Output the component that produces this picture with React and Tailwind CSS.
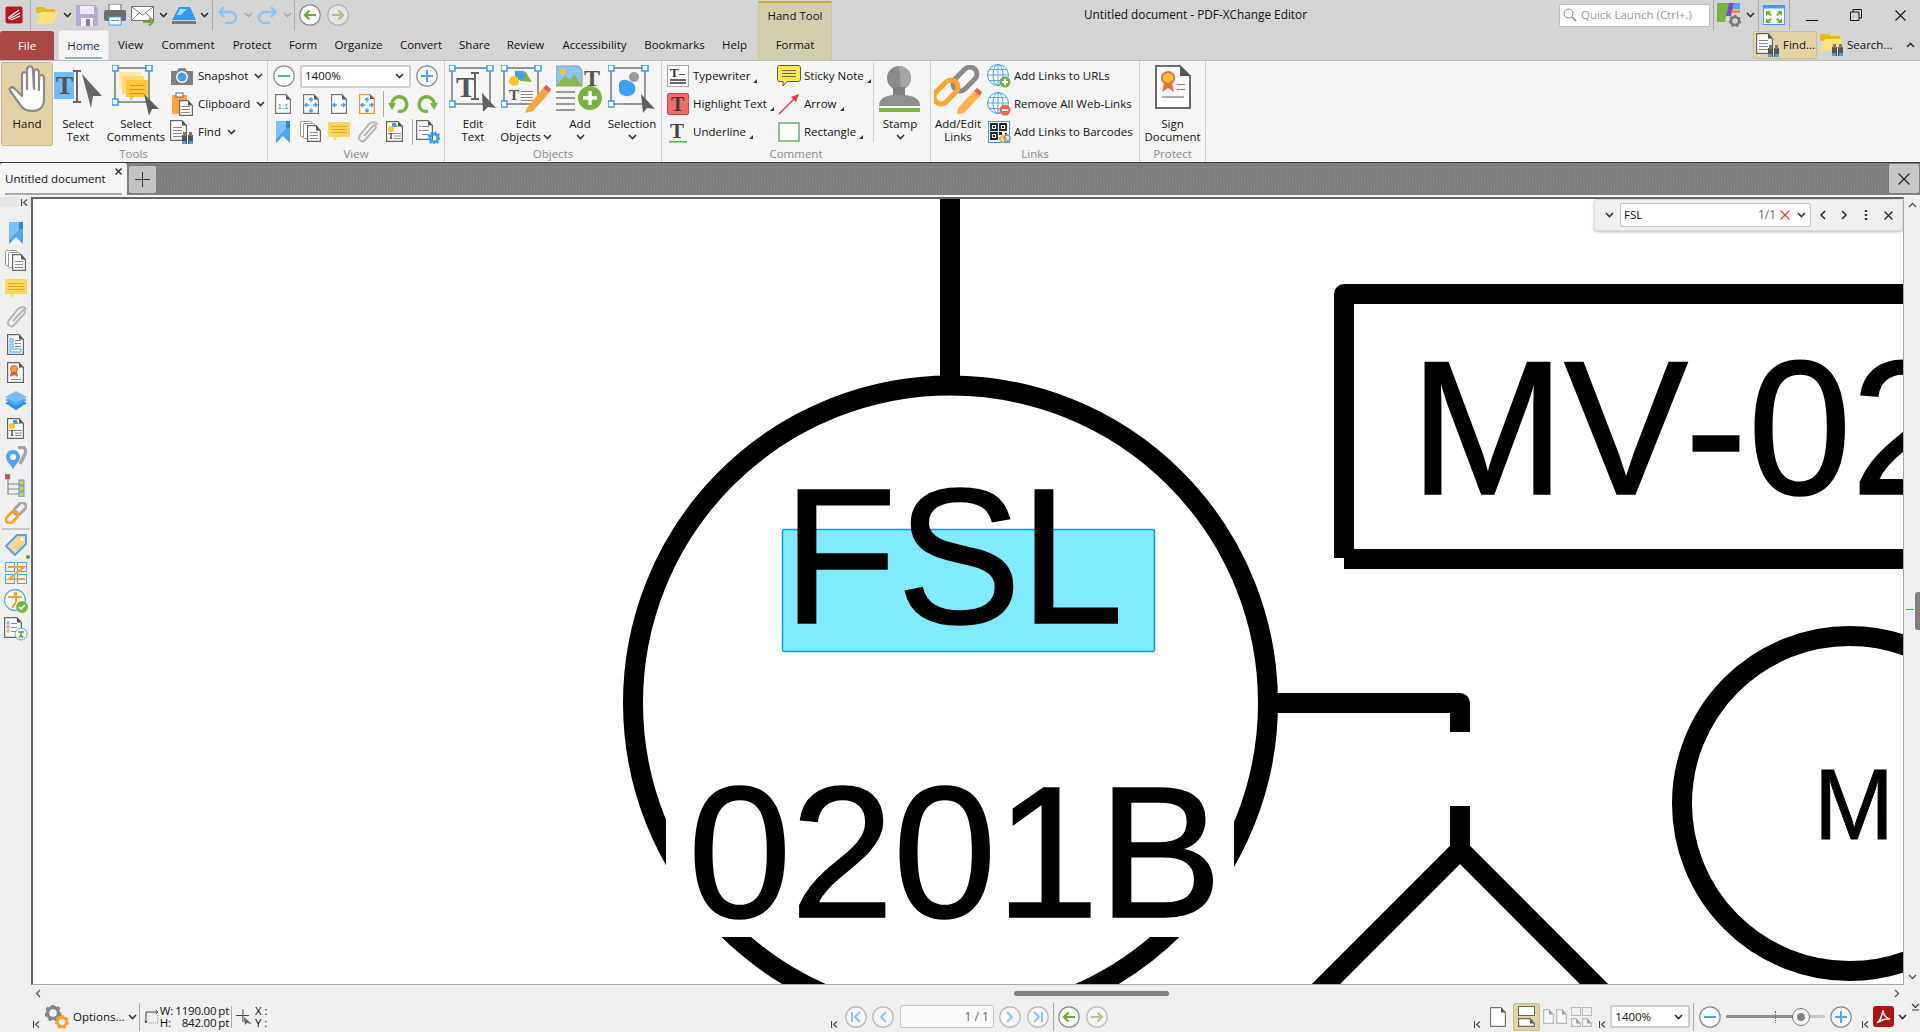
import React from "react";

const S = ({ w = 24, h = 24, v, children }) => (
  <svg width={w} height={h} viewBox={v || `0 0 ${w} ${h}`} className="block shrink-0">{children}</svg>
);

const Chev = ({ c = "#333" }) => (
  <svg width="9" height="6" viewBox="0 0 9 6" className="block shrink-0"><path d="M1 1 L4.5 4.5 L8 1" fill="none" stroke={c} strokeWidth="1.6" /></svg>
);
const Corner = () => (
  <svg width="4" height="4" viewBox="0 0 4 4" className="block shrink-0 mt-[9px] ml-[3px]"><path d="M4 0V4H0Z" fill="#333" /></svg>
);
const Sep = ({ h = 30 }) => <div style={{ height: h }} className="w-px bg-[#aaaaaa] shrink-0" />;
const Grip = ({ h = 15 }) => (
  <div className="flex flex-col items-start w-[10px] shrink-0">
    <div style={{ height: h }} className="w-[9px] bg-[radial-gradient(#a8a8a8_35%,transparent_40%)] bg-[length:2px_2px]" />
    <Collapse />
  </div>
);
const Collapse = () => (
  <svg width="7" height="7" viewBox="0 0 7 7" className="block mt-[1px]"><path d="M.5 0V7M6 .5 2.5 3.5 6 6.5" fill="none" stroke="#444" strokeWidth="1.1" /></svg>
);

/* ---------- shared drawing pieces ---------- */
const Frame = ({ x = 3, y = 3, w = 34, h = 34, br = false }) => (
  <g>
    <rect x={x} y={y} width={w} height={h} fill="none" stroke="#959595" strokeWidth="2" />
    {[[x, y], [x + w, y], [x, y + h]].concat(br ? [[x + w, y + h]] : []).map(([a, b], i) => (
      <rect key={i} x={a - 3} y={b - 3} width="6" height="6" fill="#fff" stroke="#3f9ff2" strokeWidth="1.6" />
    ))}
  </g>
);
const T = ({ x, y, s = 24, c = "#555", f = "Liberation Serif" }) => (
  <text x={x} y={y} fontFamily={f} fontWeight="700" fontSize={s} fill={c}>T</text>
);
const Doc = ({ x = 0, y = 0, w = 16, h = 21, sw = 1.2, c = "#666" }) => (
  <g transform={`translate(${x} ${y})`}>
    <path d={`M.6 .6H${w - 5}L${w - .6} 5.6V${h - .6}H.6Z`} fill="#fff" stroke={c} strokeWidth={sw} />
    <path d={`M${w - 5} .6L${w - .6} 5.6H${w - 5}Z`} fill="#555" />
  </g>
);
const Bino = ({ x, y }) => (
  <g transform={`translate(${x} ${y})`}>
    <rect x="0" y="3" width="5" height="9" fill="#555" /><rect x="6" y="3" width="5" height="9" fill="#555" />
    <rect x="1" y="0" width="3" height="4" fill="#777" /><rect x="7" y="0" width="3" height="4" fill="#777" />
    <rect x="0" y="9" width="4" height="3" fill="#3f9ff2" /><rect x="7" y="9" width="4" height="3" fill="#3f9ff2" />
  </g>
);
const Lines = ({ x, y, w, n = 3, d = 4, c = "#888" }) => (
  <g>{Array.from({ length: n }).map((_, i) => <rect key={i} x={x} y={y + i * d} width={w} height="1" fill={c} />)}</g>
);
const Circle = ({ children, op = 1 }) => (
  <svg width="22" height="22" viewBox="0 0 22 22" opacity={op} className="block shrink-0">
    <circle cx="11" cy="11" r="10.2" fill="#fbfbfb" stroke="#8c8c8c" strokeWidth="1.2" />{children}
  </svg>
);
const MinusC = () => <Circle><rect x="5" y="10" width="12" height="2" fill="#4da6f5" /></Circle>;
const PlusC = () => <Circle><path d="M5 11H17M11 5V17" stroke="#4da6f5" strokeWidth="2" /></Circle>;
const NavBack = ({ op }) => <Circle op={op}><path d="M17 11H6M10.5 6.5 6 11l4.5 4.5" fill="none" stroke="#6fa93a" strokeWidth="2.2" /></Circle>;
const NavFwd = ({ op }) => <Circle op={op}><path d="M5 11H16M11.5 6.5 16 11l-4.5 4.5" fill="none" stroke="#6fa93a" strokeWidth="2.2" /></Circle>;
const NavB = ({ d }) => (
  <Circle op={0.55}><path d={d} fill="none" stroke="#3f9ff2" strokeWidth="2" /></Circle>
);

/* ---------- toolbar icons ---------- */
const Logo = () => (
  <S w={18} h={18}><rect width="17" height="17" x=".5" y=".5" rx="2" fill="#b3191c" /><path d="M3 12 14 4M4 13 15 7M6 14 15 10" stroke="#fff" strokeWidth="1.2" /><path d="M3 12l1 2 2-1" fill="#ddd" /></S>
);
const Folder = () => (
  <S w={24} h={20}><path d="M1 18V2H9L11 4H20V8H1Z" fill="#e8b722" /><path d="M1 19 6 7H23L18 19Z" fill="#fde27a" /></S>
);
const Save = () => (
  <S w={22} h={22}><path d="M0 1H19L22 4V22H0Z" fill="#b7a9d8" /><rect x="4" y="2" width="14" height="8" fill="#eeeaf6" /><rect x="5" y="14" width="12" height="8" fill="#f4f2f9" /><rect x="10" y="15" width="4" height="7" fill="#8878b5" /></S>
);
const Print = () => (
  <S w={22} h={22}><rect x="5" y="0" width="12" height="7" fill="#fff" stroke="#666" /><rect x="0" y="6" width="22" height="11" rx="2" fill="#6d6d6d" /><rect x="5" y="13" width="12" height="8" fill="#fff" stroke="#3f9ff2" /><rect x="7" y="16" width="8" height="1" fill="#3f9ff2" /></S>
);
const Mail = () => (
  <S w={24} h={21}><rect x=".5" y="1.5" width="22" height="14" fill="#fff" stroke="#777" /><path d="M1 2 11.5 10 22 2M1 15 8 8M22 15 15 8" fill="none" stroke="#777" /><path d="M12 17H21M18 13.5 22 17 18 20.5" fill="none" stroke="#6fa93a" strokeWidth="2" /></S>
);
const Cloud = () => (
  <S w={24} h={18}><path d="M0 14 7 1H18L24 14Z" fill="#2e9bf0" /><path d="M8 3H15L9 9H5Z" fill="#9fd3fa" /><rect x="0" y="15" width="24" height="3" fill="#777" /></S>
);
const Undo = ({ flip }) => (
  <svg width="20" height="20" viewBox="0 0 20 20" className={flip ? "block shrink-0 -scale-x-100" : "block shrink-0"}>
    <path d="M2 7H12C16 7 18 10 18 12.5C18 16 15 18 12 18H7M6 2 1.5 7 6 12" fill="none" stroke="#8cc4f0" strokeWidth="2.6" />
  </svg>
);
const Hand = () => (
  <S w={38} h={48} v="-1 -1 38 48"><path d="M13 30 5 22C2 20-1 23 2 26L12 40C15 44 18 45 23 45 31 45 35 40 35 33V12C35 8 30 8 30 12V24 7C30 2 25 2 25 7V23L24 4C24-1 18-1 18 4V23 9C18 5 13 5 13 9Z" fill="#fff" stroke="#8a8a8a" strokeWidth="2.2" strokeLinejoin="round" /></S>
);
const SelText = () => (
  <S w={48} h={44}><rect x="0" y="7" width="20" height="27" fill="#74bcf6" /><T x="2" y="29" s={26} /><rect x="22" y="6" width="2" height="32" fill="#666" /><rect x="19" y="5" width="8" height="2" fill="#666" /><rect x="19" y="36" width="8" height="2" fill="#666" /><path d="M28 9 48 31 39 31 37 43Z" fill="#666" /></S>
);
const SelComments = () => (
  <S w={48} h={50}><Frame x={3} y={3} w={34} h={34} /><rect x="7" y="7" width="22" height="17" fill="#fde9a8" /><rect x="10" y="11" width="22" height="18" fill="#fddb74" /><path d="M14 15H36V32H22L18 37V32H14Z" fill="#fbc73f" /><Lines x={18} y={20} w={14} c="#d99b13" /><path d="M32 29 47 44 40 44 37 51Z" fill="#5f5f5f" /></S>
);
const Camera = () => (
  <S w={22} h={18}><path d="M0 4H6L8 1H14L16 4H22V18H0Z" fill="#808080" /><circle cx="11" cy="10" r="6" fill="#fff" /><circle cx="11" cy="10" r="4.5" fill="#3f9ff2" /></S>
);
const Clipb = () => (
  <S w={22} h={24}><rect x="1" y="3" width="15" height="19" fill="#fba63c" /><rect x="5" y="1" width="7" height="4" fill="#fff" stroke="#666" /><Doc x={8} y={8} w={14} h={16} /><Lines x={10} y={14} w={9} n={3} d={3} /></S>
);
const FindDoc = () => (
  <S w={24} h={24}><Doc x={0} y={0} w={17} h={21} /><Lines x={3} y={7} w={9} n={4} d={3} /><Bino x={12} y={12} /></S>
);
const PgIcon = ({ children, w = 16, h = 20, c = "#666" }) => (
  <S w={w} h={h}><Doc w={w} h={h} c={c} />{children}</S>
);
const FitArrows = ({ v = true, h = true, c = "#3f9ff2" }) => (
  <g fill="none" stroke={c} strokeWidth="1.4">
    {h && <path d="M2 11H6M4 9 2 11 4 13M10 11H14M12 9 14 11 12 13" />}
    {v && <path d="M8 4V8M6 6 8 4 10 6M8 14V18M6 16 8 18 10 16" />}
  </g>
);
const Rotate = ({ flip }) => (
  <svg width="22" height="20" viewBox="0 0 22 20" className={flip ? "block shrink-0 -scale-x-100" : "block shrink-0"}>
    <path d="M4 12C3 5 9 2 13 3 18 4 20 10 18 14 16.5 17 13 18 10 17" fill="none" stroke="#7ab342" strokeWidth="3.4" /><path d="M0 9 8 9 4 16Z" fill="#7ab342" />
  </svg>
);
const Bookmark = ({ s = 22 }) => (
  <S w={s} h={s} v="0 0 22 22"><path d="M4 0H18V22L11 15 4 22Z" fill="#4da6f5" /><path d="M4 0H14V8L4 18Z" fill="#7ec0f8" /><rect x="14" y="0" width="4" height="7" fill="#2c85d6" /></S>
);
const Pages = ({ s = 22 }) => (
  <S w={s} h={s} v="0 0 22 22"><rect x=".5" y=".5" width="11" height="15" rx="1" fill="#fff" stroke="#999" /><rect x="3.5" y="2.5" width="11" height="15" rx="1" fill="#fff" stroke="#999" /><Doc x={7} y={4} w={14} h={17} /><Lines x={10} y={11} w={8} n={3} d={3} /></S>
);
const Comm = ({ s = 22 }) => (
  <S w={s} h={s} v="0 0 22 22"><path d="M0 1H22V16H9L6 21V16H0Z" fill="#fdd55f" /><Lines x={3} y={5} w={16} n={3} d={3} c="#e6a821" /></S>
);
const Clip = ({ s = 22 }) => (
  <S w={s} h={s} v="0 0 22 22"><path d="M8 15 17 5C19 3 21 6 19 8L9 19C6 22 1 19 4 14L13 3C16 0 21 1 21 4" fill="none" stroke="#b8b8b8" strokeWidth="2" /></S>
);
const ObjDoc = () => (
  <S w={18} h={22}><Doc w={17} h={21} /><path d="M6 5 9 1 12 6H6Z" fill="#7ab342" /><rect x="6" y="2" width="4" height="4" fill="#3f9ff2" /><circle cx="5" cy="8" r="3" fill="#fcc52f" /><T x="2" y="18" s={9} c="#444" /><Lines x={8} y={12} w={7} n={3} d={2.5} /></S>
);
const FormDoc = () => (
  <S w={18} h={22}><Doc w={17} h={21} /><rect x="3" y="5" width="3" height="3" fill="none" stroke="#3f9ff2" /><rect x="3" y="10" width="3" height="3" fill="none" stroke="#3f9ff2" /><Lines x={8} y={6} w={6} n={3} d={3} /><rect x="3" y="15" width="11" height="3" fill="#fff" stroke="#3f9ff2" /></S>
);
const CertDoc = () => (
  <S w={18} h={22}><Doc w={17} h={21} /><circle cx="7" cy="7" r="3.5" fill="#f9a33a" stroke="#e8593f" /><path d="M4 10 3 15 7 13 11 15 10 10Z" fill="#e8593f" /><Lines x={4} y={17} w={10} n={1} /></S>
);
const Layers = () => (
  <S w={22} h={20}><path d="M0 12 11 7 22 12 11 19Z" fill="#2f8fe0" /><path d="M0 9 11 4 22 9 11 15Z" fill="#4da6f5" /><path d="M0 6 11 0 22 6 11 12Z" fill="#74bcf6" /></S>
);
const Loc = () => (
  <S w={22} h={23}><path d="M13 2C19-1 22 4 20 8L15 18" fill="none" stroke="#a5a5a5" strokeWidth="3.4" /><path d="M8 23C5 18 1 15 1 11 1 7 4 4 8 4S15 7 15 11C15 15 11 18 8 23Z" fill="#4da6f5" /><circle cx="8" cy="11" r="3" fill="#fff" /></S>
);
const Tree = () => (
  <S w={22} h={23}><rect x="0" y="0" width="5" height="5" fill="#e8452f" stroke="#3f9ff2" strokeWidth=".6" /><path d="M3 5V20H16M3 10H16M3 15H16" fill="none" stroke="#888" strokeWidth="1.2" /><rect x="14" y="6" width="5" height="5" fill="#fcc52f" stroke="#3f9ff2" /><rect x="14" y="12" width="5" height="5" fill="#fcc52f" stroke="#3f9ff2" /><rect x="14" y="18" width="5" height="5" fill="#fcc52f" stroke="#3f9ff2" /></S>
);
const LinkI = ({ s = 22 }) => (
  <S w={s} h={s} v="0 0 22 22"><rect x="8" y="3" width="14" height="7.5" rx="3.7" transform="rotate(-45 15 6.750)" fill="none" stroke="#a5a5a5" strokeWidth="2.8" /><rect x="0" y="11.500" width="14" height="7.5" rx="3.7" transform="rotate(-45 7 15.250)" fill="none" stroke="#f9a02c" strokeWidth="2.8" /></S>
);
const Tag = () => (
  <div className="relative"><S w={22} h={22}><path d="M12 1H21V10L10 21 1 12Z" fill="#fbd39a" stroke="#4da6f5" strokeWidth="2" /><circle cx="17" cy="5" r="1.6" fill="#fff" /></S><div className="absolute -right-[3px] bottom-[-3px] w-[4px] h-[4px] rounded-full bg-[#5b9e2b]" /></div>
);
const Reading = () => (
  <S w={22} h={22}><rect x=".5" y=".5" width="9" height="9" fill="none" stroke="#4da6f5" /><rect x="12.5" y=".5" width="9" height="9" fill="none" stroke="#4da6f5" /><rect x=".5" y="12.5" width="9" height="9" fill="none" stroke="#4da6f5" /><rect x="12.5" y="12.5" width="9" height="9" fill="none" stroke="#4da6f5" /><path d="M3 5H19L4 17H20" fill="none" stroke="#f9a02c" strokeWidth="2" /></S>
);
const Access = () => (
  <S w={24} h={24}><circle cx="11" cy="11" r="10.4" fill="#fff" stroke="#4da6f5" strokeWidth="1.2" /><circle cx="11.500" cy="5" r="2" fill="#f9a02c" /><path d="M4 8H18M12 8V13M12 13 8 19" fill="none" stroke="#f9a02c" strokeWidth="2" /><circle cx="18" cy="18" r="6" fill="#7ab342" /><path d="M15 18l2 2 4-4" fill="none" stroke="#fff" strokeWidth="1.6" /></S>
);
const AccDoc = () => (
  <S w={24} h={24}><Doc w={18} h={21} /><rect x="3" y="5" width="2" height="2" fill="none" stroke="#3f9ff2" strokeWidth=".8" /><rect x="3" y="9" width="2" height="2" fill="none" stroke="#e8593f" strokeWidth=".8" /><rect x="3" y="13" width="2" height="2" fill="none" stroke="#7ab342" strokeWidth=".8" /><Lines x={7} y={6} w={6} n={3} d={4} /><circle cx="17" cy="17" r="6" fill="#fff" stroke="#4da6f5" /><path d="M14 15H20M17 15V18L15 21M17 18 19 21" fill="none" stroke="#5a9e3a" strokeWidth="1.4" /></S>
);
const FormSettings = () => (
  <S w={24} h={24}><Doc w={17} h={20} /><Lines x={6} y={6} w={7} n={3} d={4} /><rect x="3" y="6" width="2" height="1" fill="#e8593f" /><rect x="3" y="10" width="2" height="1" fill="#e8593f" /><circle cx="18" cy="18" r="4" fill="none" stroke="#3f9ff2" strokeWidth="3" /><circle cx="18" cy="18" r="6" fill="none" stroke="#3f9ff2" strokeWidth="1.5" strokeDasharray="2 2" /></S>
);
const EditText = () => (
  <S w={48} h={46}><Frame x={3} y={3} w={38} h={36} /><T x="7" y="32" s={30} /><rect x="25" y="8" width="2" height="26" fill="#666" /><rect x="22" y="7" width="8" height="2" fill="#666" /><rect x="22" y="33" width="8" height="2" fill="#666" /><path d="M33 28 47 43 39 42 34 47Z" fill="#5f5f5f" /></S>
);
const EditObj = () => (
  <S w={50} h={48}><Frame x={3} y={3} w={34} h={36} /><path d="M19 16 24 6 31 17Z" fill="#7ab342" /><rect x="14" y="6" width="9" height="9" fill="#3f9ff2" /><circle cx="13" cy="16" r="5" fill="#fcc52f" /><T x="8" y="35" s={15} /><Lines x={20} y={26} w={12} n={4} d={3} /><path d="M26 43 42 23 48 28 32 46 24 48Z" fill="#fba63c" /><path d="M42 23 45 20 50 24 48 28Z" fill="#ea5a4a" /></S>
);
const AddI = () => (
  <S w={48} h={48}><path d="M0 1H23L26 5V21H0Z" fill="#8cc4f0" stroke="#999" /><path d="M0 21 9 11 14 15 18 9 26 21Z" fill="#8bb84c" /><circle cx="7" cy="7" r="3" fill="#fcc52f" /><T x="28" y="21" s={24} /><rect x="0" y="26" width="19" height="2" fill="#999" /><rect x="0" y="32" width="19" height="2" fill="#999" /><rect x="0" y="38" width="19" height="2" fill="#999" /><rect x="0" y="44" width="19" height="2" fill="#999" /><circle cx="34" cy="33" r="12" fill="#7ab342" /><path d="M27 33H41M34 26V40" stroke="#fff" strokeWidth="3.4" /></S>
);
const Selection = () => (
  <S w={48} h={48}><Frame x={3} y={3} w={34} h={36} /><path d="M11 19C12 14 17 14 21 16 27 17 29 24 26 28 22 33 13 32 11 26Z" fill="#3f9ff2" /><circle cx="26" cy="12" r="5" fill="#9a9a9a" /><path d="M33 29 47 44 39 43 35 48Z" fill="#5f5f5f" /></S>
);
const TypeW = () => (
  <S w={22} h={22}><rect x=".5" y=".5" width="21" height="21" fill="#fff" stroke="#555" strokeDasharray="1 1" /><T x="3" y="12" s={13} c="#333" /><rect x="12" y="9" width="6" height="1" fill="#555" /><rect x="3" y="14" width="16" height="2" fill="#666" /><rect x="3" y="17" width="16" height="2" fill="#666" /></S>
);
const HiT = () => (
  <S w={22} h={22}><rect x=".5" y=".5" width="21" height="21" rx="1.5" fill="#f36a6a" stroke="#c94848" /><T x="4" y="18" s={20} c="#3a3a3a" /></S>
);
const UnderT = () => (
  <S w={22} h={22}><T x="3" y="17" s={21} c="#444" /><rect x="2" y="20" width="18" height="1.5" fill="#35c24a" /></S>
);
const Sticky = () => (
  <S w={24} h={22}><path d="M3 .5H21C23 .5 23.5 2 23.5 3V14C23.5 16 22 16.500 21 16.500H10L6 21V16.500H3C1 16.500 .5 15 .5 14V3C.5 2 1 .5 3 .5Z" fill="#fde84f" stroke="#5a5a3a" /><Lines x={5} y={5} w={14} n={3} d={3} c="#666" /></S>
);
const ArrowI = () => (
  <S w={22} h={22}><path d="M1 21 18 4" stroke="#e43d3d" strokeWidth="1.4" /><path d="M21 1 13 4 18 9Z" fill="#e43d3d" /></S>
);
const RectI = () => (
  <S w={22} h={20}><rect x="1" y="1" width="20" height="18" fill="#fff" stroke="#6fb46f" strokeWidth="1.6" /></S>
);
const Stamp = () => (
  <S w={42} h={48}><circle cx="20" cy="13" r="12" fill="#8a8a8a" /><path d="M20 1A12 12 0 0 1 32 13 12 12 0 0 1 22 25Z" fill="#a5a5a5" /><rect x="14" y="22" width="12" height="10" fill="#808080" /><path d="M0 41C0 34 5 31 14 30H26C35 31 41 34 41 41Z" fill="#8f8f8f" /><rect x="0" y="43" width="41" height="4" fill="#7ab342" /></S>
);
const AddLinks = () => (
  <S w={48} h={50}>
    <rect x="17" y="7" width="28" height="14" rx="7" transform="rotate(-45 31 14)" fill="none" stroke="#8a8a8a" strokeWidth="5" />
    <rect x="-2" y="20" width="28" height="14" rx="7" transform="rotate(-45 12 27)" fill="none" stroke="#fba62c" strokeWidth="5" />
    <path d="M24 43 40 26 46 31 30 48 23 49Z" fill="#fbb34a" /><path d="M40 26 43 23 48 27 46 31Z" fill="#ea5a4a" />
  </S>
);
const Globe = ({ c, plus }) => (
  <S w={24} h={24}><circle cx="11" cy="11" r="10.400" fill="#fff" stroke="#3f9ff2" /><ellipse cx="11" cy="11" rx="5" ry="10.400" fill="none" stroke="#3f9ff2" /><path d="M11 0V22M0 11H22M2 5.500H20M2 16.500H20" stroke="#3f9ff2" strokeWidth=".9" /><circle cx="18" cy="18" r="5.500" fill={c} /><path d={plus ? "M15 18H21M18 15V21" : "M15 18H21"} stroke="#fff" strokeWidth="2" /></S>
);
const QR = () => (
  <S w={23} h={23}><rect x=".5" y=".5" width="21" height="21" fill="#fff" stroke="#3f9ff2" /><path d="M3 3H9V9H3ZM12 3H18V9H12ZM3 12H9V18H3Z" fill="none" stroke="#222" strokeWidth="1.8" /><rect x="5" y="5" width="2" height="2" fill="#222" /><rect x="14" y="5" width="2" height="2" fill="#222" /><rect x="5" y="14" width="2" height="2" fill="#222" /><rect x="11" y="11" width="3" height="3" fill="#222" /><rect x="17" y="12" width="2" height="2" fill="#222" /><rect x="12" y="15" width="6" height="6" rx="3" transform="rotate(-45 15 18)" fill="none" stroke="#fba62c" strokeWidth="1.6" /><rect x="16" y="14" width="6" height="6" rx="3" transform="rotate(-45 19 17)" fill="none" stroke="#999" strokeWidth="1.6" /></S>
);
const Sign = () => (
  <S w={36} h={44}><path d="M1 1H25L35 11V43H1Z" fill="#fff" stroke="#6a6a6a" strokeWidth="2" /><path d="M25 1 35 11H25Z" fill="#555" /><circle cx="13" cy="13" r="6" fill="#fcc52f" stroke="#f06a48" strokeWidth="2.200" /><path d="M9 18 7 27 13 23 19 27 17 18Z" fill="#f06a48" /><Lines x={22} y={19} w={8} n={2} d={5} c="#888" /><rect x="7" y="31" width="22" height="2" fill="#aaa" /></S>
);
const Gear = ({ c, x, y, r }) => (
  <g transform={`translate(${x} ${y})`}><circle r={r} fill="none" stroke={c} strokeWidth={r * .62} /><circle r={r * 1.3} fill="none" stroke={c} strokeWidth={r * .5} strokeDasharray={`${r * .6} ${r * .55}`} /></g>
);
const Options = () => (
  <S w={24} h={24}><Gear c="#888" x={8} y={8} r={5.500} /><Gear c="#f9a02c" x={17} y={17} r={4.500} /></S>
);
const Settings = () => (
  <S w={27} h={26}><path d="M0 1H12L8 20H0Z" fill="#7ab342" /><path d="M12 1H17L14 14H9Z" fill="#7b4bc0" /><path d="M17 1H23V7H16Z" fill="#4da6f5" /><path d="M15 8H23V11H14Z" fill="#f08a5a" /><Gear c="#777" x={18} y={19} r={4} /></S>
);
const Expand = () => (
  <S w={22} h={20}><rect x=".5" y=".5" width="21" height="19" fill="#fff" stroke="#3f9ff2" /><rect x=".5" y=".5" width="21" height="3" fill="#3f9ff2" /><path d="M3 6H8L6.500 7.500 9 10 7.500 11 5 9 3 11ZM19 6H14L15.500 7.500 13 10 14.500 11 17 9 19 11ZM3 18H8L6.500 16.500 9 14 7.500 13 5 15 3 13ZM19 18H14L15.500 16.500 13 14 14.500 13 17 15 19 13Z" fill="#6fa93a" /></S>
);
const FindFolder = () => (
  <S w={24} h={24}><path d="M0 16V1H9L11 3H20V8H0Z" fill="#e8b722" /><path d="M0 18 5 6H24L19 18Z" fill="#fde27a" /><Bino x={12} y={11} /></S>
);

/* ---------- ribbon building blocks ---------- */
const BigBtn = ({ w, icon, lines, chev, sel }) => (
  <div style={{ width: w }} className={sel ? "shrink-0 h-[84px] flex flex-col items-center pt-[2px] leading-[13px] bg-[#e3d3a4] border border-[#c9b98a] rounded-[2px]" : "shrink-0 h-[84px] flex flex-col items-center pt-[3px] leading-[13px]"}>
    <div className="h-[52px] flex justify-center items-start">{icon}</div>
    {lines.map((l, i) => (
      <div key={i} className="flex items-center whitespace-nowrap h-[13px] gap-[2px]">{l}{chev === "inline" && i === lines.length - 1 && <Chev />}</div>
    ))}
    {chev === "below" && <div className="h-[13px] flex items-center"><Chev /></div>}
  </div>
);
const SmallRow = ({ icon, label, gap = "ml-[4px]", chev, corner, chevGap = "ml-[6px]" }) => (
  <div className="flex items-center h-[28px] whitespace-nowrap">
    <div className="w-[24px] flex justify-center shrink-0">{icon}</div>
    <span className={gap}>{label}</span>
    {chev && <span className={chevGap}><Chev /></span>}
    {corner && <Corner />}
  </div>
);
const Group = ({ w, label, children }) => (
  <div style={{ width: w }} className="shrink-0 h-[101px] border-r border-[#d0d0d0] flex flex-col pt-[1px]">
    <div className="h-[84px] flex">{children}</div>
    <div className="h-[16px] leading-[16px] text-center text-[#8a8a8a]">{label}</div>
  </div>
);
const Cell = ({ children }) => <div className="w-[28px] h-[28px] flex items-center justify-center shrink-0">{children}</div>;
const Combo = ({ w, t = "1400%" }) => (
  <div style={{ width: w }} className="h-[23px] shrink-0 flex items-center justify-between bg-white border-2 border-[#cfcfcf] rounded-[2px] pl-[3px] pr-[5px]">
    <span>{t}</span><Chev />
  </div>
);

const TABS = [
  ["View", "w-[43px]"], ["Comment", "w-[72px]"], ["Protect", "w-[56px]"], ["Form", "w-[46px]"], ["Organize", "w-[65px]"],
  ["Convert", "w-[60px]"], ["Share", "w-[47px]"], ["Review", "w-[55px]"], ["Accessibility", "w-[83px]"], ["Bookmarks", "w-[77px]"], ["Help", "w-[43px]"],
];
const SIDE1 = [<Bookmark />, <Pages />, <Comm />, <Clip />, <FormDoc />, <CertDoc />, <Layers />, <ObjDoc />, <Loc />, <Tree />, <LinkI />];
const SIDE2 = [<Tag />, <Reading />, <Access />, <AccDoc />];

const Canvas = () => (
  <svg width="1870" height="785" viewBox="33 199 1870 785" className="block">
    <g fill="none" stroke="#000" strokeWidth="20">
      <path d="M950 190V380" />
      <circle cx="950.500" cy="703" r="317.500" />
      <path d="M1275 703H1460V732" strokeLinejoin="round" />
      <path d="M1460 806V850" />
      <path d="M1300 1010 1460 850 1620 1010" strokeLinejoin="miter" />
      <path d="M1344 558V294H1920" strokeLinejoin="round" />
      <path d="M1344 559H1920" />
      <circle cx="1849.500" cy="803.500" r="167.500" />
    </g>
    <rect x="666" y="780" width="568" height="157" fill="#fff" />
    <rect x="782.500" y="529.500" width="372" height="122" rx="2" fill="#80eaff" stroke="#00a2dc" strokeWidth="1.5" />
    <g fontFamily="Liberation Sans" fontSize="186" fill="#000" stroke="#000" strokeWidth="1.5">
      <text transform="translate(0 623) scale(1 1.04)" x="783 897 1020" y="0">FSL</text>
      <text transform="translate(0 917) scale(1 1.01)" x="688 790.500 893 995.500 1098" y="0">0201B</text>
      <text transform="translate(0 494) scale(1 1.03)" x="1410 1564 1685 1748 1851" y="0">MV-02</text>
    </g>
    <text transform="translate(0 839) scale(1 1.04)" x="1814" y="0" fontFamily="Liberation Sans" fontSize="96" fill="#000" stroke="#000" strokeWidth="0.8">M</text>
  </svg>
);

export default function App() {
  return (
    <div className="w-[1920px] h-[1032px] overflow-hidden flex flex-col bg-[#f0f0f0] text-[#111] text-[11.5px] font-['Open_Sans',sans-serif]">
      {/* title bar */}
      <div className="h-[30px] flex bg-[#d4d4d4] shrink-0">
        <div className="w-[758px] flex items-center shrink-0">
          <div className="ml-[5px]"><Logo /></div>
          <div className="ml-[7px]"><Sep /></div>
          <div className="ml-[4px]"><Folder /></div>
          <div className="ml-[4px]"><Chev /></div>
          <div className="ml-[4px]"><Save /></div>
          <div className="ml-[6px]"><Print /></div>
          <div className="ml-[5px]"><Mail /></div>
          <div className="ml-[4px]"><Chev /></div>
          <div className="ml-[4px]"><Cloud /></div>
          <div className="ml-[4px]"><Chev /></div>
          <div className="ml-[3px]"><Sep /></div>
          <div className="ml-[5px]"><Undo /></div>
          <div className="ml-[6px]"><Chev c="#aaa" /></div>
          <div className="ml-[4px]"><Undo flip /></div>
          <div className="ml-[6px]"><Chev c="#aaa" /></div>
          <div className="ml-[2px]"><Sep /></div>
          <div className="ml-[4px]"><NavBack /></div>
          <div className="ml-[6px]"><NavFwd op={0.45} /></div>
        </div>
        <div className="w-[74px] shrink-0 mt-[1px] border-t-2 border-t-[#d6ad2b] border-x border-x-[#cfc48f] bg-[#d3cdb0] flex items-center justify-center pb-[1px]">Hand Tool</div>
        <div className="flex-1 flex items-center justify-center pb-[1px] text-[11.8px]">Untitled document - PDF-XChange Editor</div>
        <div className="w-[361px] shrink-0 flex items-center">
          <div className="w-[151px] h-[23px] ml-0 flex items-center bg-white border border-[#bdbdbd] rounded-[2px] pl-[3px] text-[#9a9a9a]">
            <svg width="14" height="14" viewBox="0 0 14 14" className="block shrink-0"><circle cx="5.500" cy="5.500" r="4.500" fill="none" stroke="#888" /><path d="M9 9l4 4" stroke="#888" strokeWidth="1.5" /></svg>
            <span className="ml-[4px]">Quick Launch (Ctrl+.)</span>
          </div>
          <div className="ml-[3px]"><Sep /></div>
          <div className="ml-[3px]"><Settings /></div>
          <div className="ml-[2px]"><Chev /></div>
          <div className="ml-[3px]"><Sep /></div>
          <div className="ml-[4px]"><Expand /></div>
          <div className="ml-[4px]"><Sep /></div>
          <svg width="12" height="12" viewBox="0 0 12 12" className="block ml-[16px]"><rect x="0" y="11" width="12" height="1.200" fill="#111" /></svg>
          <svg width="12" height="12" viewBox="0 0 12 12" className="block ml-[32px]"><path d="M3 3V.5H11.500V9H9M.5 3H9V11.500H.5Z" fill="none" stroke="#111" /></svg>
          <svg width="11" height="11" viewBox="0 0 11 11" className="block ml-[33px]"><path d="M.5 .5 10.500 10.500M10.500 .5 .5 10.500" stroke="#111" strokeWidth="1.1" /></svg>
        </div>
      </div>

      {/* menu tabs */}
      <div className="h-[30px] flex bg-[#d4d4d4] shrink-0">
        <div className="w-[54px] h-[29px] mt-[1px] bg-[#a94646] text-white flex items-center justify-center rounded-t-[3px] shrink-0">File</div>
        <div className="relative w-[51px] ml-[4px] bg-[#f5f5f5] rounded-t-[3px] border-x border-t border-[#e2e2e2] flex items-center justify-center shrink-0 text-[#1c2c60]">
          Home
          <div className="absolute left-[6px] right-[6px] bottom-[1px] h-[2px] bg-[#9bb4cc]" />
        </div>
        {TABS.map(([t, w]) => <div key={t} className={`${w} flex items-center justify-center shrink-0`}>{t}</div>)}
        <div className="w-[74px] ml-[2px] shrink-0 border-x border-x-[#cfc48f] bg-[#d3cdb0] flex items-center justify-center">Format</div>
        <div className="flex-1" />
        <div className="w-[64px] h-[28px] mt-[1px] flex items-center bg-[#e3d3a4] border border-[#cdbd8f] rounded-[2px] pl-[2px] shrink-0">
          <FindDoc /><span className="ml-[3px]">Find...</span>
        </div>
        <div className="ml-[3px] flex items-center shrink-0 w-[70px]"><FindFolder /><span className="ml-[3px]">Search...</span></div>
        <div className="flex items-center ml-[16px]"><svg width="9" height="6" viewBox="0 0 9 6" className="block"><path d="M1 5 4.500 1.500 8 5" fill="none" stroke="#333" strokeWidth="1.600" /></svg></div>
        <div className="w-[5px]" />
      </div>

      {/* ribbon */}
      <div className="h-[102px] flex bg-[#f5f5f5] border-t border-[#bdbdbd] shrink-0">
        <Group w={268} label="Tools">
          <div className="ml-px" />
          <BigBtn w={52} sel icon={<Hand />} lines={["Hand"]} />
          <div className="ml-px" />
          <BigBtn w={48} icon={<SelText />} lines={["Select", "Text"]} />
          <div className="ml-px" />
          <BigBtn w={66} icon={<SelComments />} lines={["Select", "Comments"]} />
          <div className="ml-[1px] flex flex-col">
            <SmallRow icon={<Camera />} label="Snapshot" chev />
            <SmallRow icon={<Clipb />} label="Clipboard" chev />
            <SmallRow icon={<FindDoc />} label="Find" chev />
          </div>
        </Group>
        <Group w={177} label="View">
          <div className="flex flex-col">
            <div className="h-[28px] flex items-center ml-[5px]">
              <MinusC /><div className="ml-[5px]"><Combo w={111} /></div><div className="ml-[5px]"><PlusC /></div>
            </div>
            <div className="h-[28px] flex items-center ml-px">
              <Cell><PgIcon c="#777"><text x="2.500" y="14.500" fontSize="8" fontFamily="Liberation Sans" fill="#2c85d6">1:1</text></PgIcon></Cell>
              <Cell><PgIcon c="#777"><FitArrows /></PgIcon></Cell>
              <Cell><PgIcon c="#777"><FitArrows v={false} /></PgIcon></Cell>
              <Cell><S w={16} h={20}><path d="M.6 .6H11L15.400 5V19.400H.6Z" fill="#fff" stroke="#f39a2a" strokeWidth="1.400" /><path d="M11 .6 15.400 5H11Z" fill="#555" /><FitArrows /></S></Cell>
              <div className="ml-[2px] mr-px"><Sep h={26} /></div>
              <Cell><Rotate /></Cell>
              <Cell><Rotate flip /></Cell>
            </div>
            <div className="h-[28px] flex items-center ml-px">
              <Cell><Bookmark s={22} /></Cell><Cell><Pages s={22} /></Cell><Cell><Comm s={22} /></Cell><Cell><Clip s={22} /></Cell><Cell><ObjDoc /></Cell>
              <div className="ml-[3px] mr-px"><Sep h={26} /></div>
              <Cell><FormSettings /></Cell>
            </div>
          </div>
        </Group>
        <Group w={217} label="Objects">
          <div className="ml-px" />
          <BigBtn w={54} icon={<EditText />} lines={["Edit", "Text"]} />
          <BigBtn w={52} icon={<EditObj />} lines={["Edit", "Objects"]} chev="inline" />
          <BigBtn w={56} icon={<AddI />} lines={["Add"]} chev="below" />
          <BigBtn w={48} icon={<Selection />} lines={["Selection"]} chev="below" />
        </Group>
        <Group w={269} label="Comment">
          <div className="ml-[4px] w-[111px] flex flex-col shrink-0">
            <SmallRow icon={<TypeW />} label="Typewriter" gap="ml-[3px]" corner />
            <SmallRow icon={<HiT />} label="Highlight Text" gap="ml-[3px]" corner />
            <SmallRow icon={<UnderT />} label="Underline" gap="ml-[3px]" corner />
          </div>
          <div className="w-[96px] flex flex-col shrink-0">
            <SmallRow icon={<Sticky />} label="Sticky Note" gap="ml-[3px]" corner />
            <SmallRow icon={<ArrowI />} label="Arrow" gap="ml-[3px]" corner />
            <SmallRow icon={<RectI />} label="Rectangle" gap="ml-[3px]" corner />
          </div>
          <div className="h-[80px] w-px bg-[#d0d0d0] shrink-0" />
          <div className="ml-[2px]" />
          <BigBtn w={48} icon={<Stamp />} lines={["Stamp"]} chev="below" />
        </Group>
        <Group w={209} label="Links">
          <BigBtn w={54} icon={<AddLinks />} lines={["Add/Edit", "Links"]} />
          <div className="ml-[2px] flex flex-col">
            <SmallRow icon={<Globe c="#7ab342" plus />} label="Add Links to URLs" gap="ml-[3px]" />
            <SmallRow icon={<Globe c="#ef6a4a" />} label="Remove All Web-Links" gap="ml-[3px]" />
            <SmallRow icon={<QR />} label="Add Links to Barcodes" gap="ml-[3px]" />
          </div>
        </Group>
        <Group w={66} label="Protect">
          <BigBtn w={65} icon={<Sign />} lines={["Sign", "Document"]} />
        </Group>
      </div>
      <div className="h-px bg-[#444] shrink-0" />

      {/* document tabs */}
      <div className="h-[32px] flex shrink-0 bg-[repeating-conic-gradient(#7b7b7b_0%_25%,#848484_0%_50%)] bg-[length:3px_3px]">
        <div className="relative w-[127px] bg-[#f5f5f5] rounded-t-[3px] flex items-center pl-[5px] shrink-0">
          Untitled document
          <svg width="7" height="7" viewBox="0 0 7 7" className="absolute right-[5px] top-[5px]"><path d="M.5 .5 6.500 6.500M6.500 .5 .5 6.500" stroke="#222" strokeWidth="1.200" /></svg>
          <div className="absolute left-[5px] right-[5px] bottom-0 h-[2px] bg-[#a9a9a9]" />
        </div>
        <div className="ml-[2px] mt-[3px] w-[27px] h-[27px] rounded-[2px] bg-[#c4c4c4] flex items-center justify-center shrink-0">
          <svg width="15" height="15" viewBox="0 0 15 15" className="block"><path d="M7.500 0V15M0 7.500H15" stroke="#333" /></svg>
        </div>
        <div className="flex-1" />
        <div className="mt-px mr-[1px] w-[30px] h-[29px] rounded-[2px] bg-[#c8c8c8] flex items-center justify-center shrink-0">
          <svg width="12" height="12" viewBox="0 0 12 12" className="block"><path d="M.5 .5 11.500 11.500M11.500 .5 .5 11.500" stroke="#222" strokeWidth="1.200" /></svg>
        </div>
      </div>
      <div className="h-[2px] bg-[#f5f5f5] shrink-0" />

      {/* main area */}
      <div className="h-[788px] flex shrink-0">
        <div className="w-[31px] shrink-0 flex flex-col items-center bg-[#f0f0f0]">
          <div className="w-full h-[10px] bg-[#e6e6e6] flex justify-end items-center pr-[3px]"><Collapse /></div>
          <div className="h-[12px] flex items-center"><div className="w-[25px] h-[9px] bg-[radial-gradient(#b0b0b0_35%,transparent_40%)] bg-[length:2px_2px]" /></div>
          {SIDE1.map((ic, i) => <div key={i} className="h-[28px] flex items-center justify-center">{ic}</div>)}
          <div className="w-[28px] h-[2px] my-px bg-[#c8c8c8] shrink-0" />
          {SIDE2.map((ic, i) => <div key={i} className="h-[28px] flex items-center justify-center">{ic}</div>)}
        </div>
        <div className="relative flex-1 min-w-0 overflow-hidden bg-white border-l-2 border-t-2 border-l-[#666] border-t-[#666] border-b border-b-[#a8a8a8] border-r border-r-[#a8a8a8]">
          <Canvas />
          <div className="absolute right-0 top-0 w-[309px] h-[32px] flex items-center bg-[#f0f0f0] border border-[#dcdcdc] rounded-[3px] shadow-[0_1px_3px_rgba(0,0,0,0.25)]">
            <div className="ml-[10px]"><Chev /></div>
            <div className="ml-[6px] w-[191px] h-[24px] flex items-center bg-white border border-[#c4c4c4] rounded-[2px] pl-[3px] pr-[4px]">
              <span>FSL</span>
              <span className="ml-auto text-[#6a6a6a] text-[12px]">1/1</span>
              <svg width="10" height="10" viewBox="0 0 10 10" className="block ml-[4px]"><path d="M.5 .5 9.500 9.500M9.500 .5 .5 9.500" stroke="#e03c3c" strokeWidth="1.100" /></svg>
              <div className="ml-[7px]"><Chev /></div>
            </div>
            <svg width="6" height="10" viewBox="0 0 6 10" className="block ml-[9px]"><path d="M5 1 1 5 5 9" fill="none" stroke="#222" strokeWidth="1.500" /></svg>
            <svg width="6" height="10" viewBox="0 0 6 10" className="block ml-[15px]"><path d="M1 1 5 5 1 9" fill="none" stroke="#222" strokeWidth="1.500" /></svg>
            <svg width="4" height="12" viewBox="0 0 4 12" className="block ml-[17px]"><path d="M2 1V3M2 5V7M2 9V11" stroke="#333" strokeWidth="2.400" /></svg>
            <svg width="9" height="9" viewBox="0 0 9 9" className="block ml-[16px]"><path d="M.5 .5 8.500 8.500M8.500 .5 .5 8.500" stroke="#222" strokeWidth="1.300" /></svg>
          </div>
        </div>
        <div className="relative w-[16px] shrink-0 bg-[#f0f0f0]">
          <svg width="9" height="6" viewBox="0 0 9 6" className="absolute left-[4px] top-[5px]"><path d="M1 5 4.500 1.500 8 5" fill="none" stroke="#555" strokeWidth="1.300" /></svg>
          <div className="absolute left-[2px] top-[412px] w-[8px] h-px bg-[#3f9ff2]" />
          <div className="absolute right-0 top-[395px] w-[5px] h-[38px] rounded-l-[3px] bg-[#808080]" />
          <svg width="9" height="6" viewBox="0 0 9 6" className="absolute left-[4px] bottom-[5px]"><path d="M1 1 4.500 4.500 8 1" fill="none" stroke="#555" strokeWidth="1.300" /></svg>
        </div>
      </div>

      {/* horizontal scrollbar */}
      <div className="h-[16px] flex items-center bg-[#efefef] shrink-0">
        <svg width="6" height="9" viewBox="0 0 6 9" className="block ml-[35px]"><path d="M5 1 1.500 4.500 5 8" fill="none" stroke="#555" strokeWidth="1.300" /></svg>
        <div className="ml-[973px] w-[155px] h-[5px] rounded-[3px] bg-[#808080]" />
        <svg width="6" height="9" viewBox="0 0 6 9" className="block ml-[725px]"><path d="M1 1 4.500 4.500 1 8" fill="none" stroke="#555" strokeWidth="1.300" /></svg>
      </div>

      {/* status bar */}
      <div className="h-[31px] flex items-center bg-[#f0f0f0] shrink-0">
        <div className="ml-[33px]"><Grip /></div>
        <div className="ml-[2px]"><Options /></div>
        <span className="ml-[4px] w-[50px] whitespace-nowrap">Options...</span>
        <div className="ml-[5px]"><Chev /></div>
        <div className="ml-[2px]"><Sep h={28} /></div>
        <svg width="15" height="15" viewBox="0 0 15 15" className="block ml-[4px]"><path d="M2 14V3H14M12 1l2 2-2 2M1 12l1 2 1-2" fill="none" stroke="#444" /><path d="M5 14H14V6" fill="none" stroke="#888" strokeDasharray="1 1" /></svg>
        <div className="ml-[1px] w-[70px] leading-[12px] whitespace-nowrap tracking-[-0.2px]">
          <div className="flex justify-between"><span>W:</span><span>1190.00<span className="ml-[2px]">pt</span></span></div>
          <div className="flex justify-between"><span>H:</span><span>842.00<span className="ml-[2px]">pt</span></span></div>
        </div>
        <div className="ml-[2px]"><Sep h={22} /></div>
        <svg width="16" height="16" viewBox="0 0 16 16" className="block ml-[4px]"><path d="M7 0V13M0 6.500H13" stroke="#444" /><path d="M8 8 16 15 11 14 9 16Z" fill="#666" /></svg>
        <div className="ml-[3px] leading-[12px] w-[14px] whitespace-nowrap"><div>X :</div><div>Y :</div></div>

        <div className="ml-[562px]"><Grip /></div>
        <div className="ml-[4px]"><NavB d="M7 6V16M15 6 10 11 15 16" /></div>
        <div className="ml-[5px]"><NavB d="M14 6 9 11 14 16" /></div>
        <div className="ml-[6px] w-[95px] h-[23px] flex items-center justify-end pr-[4px] bg-[#f9f9f9] border border-[#c4c4c4] rounded-[2px] text-[#666] text-[12px]">1 / 1</div>
        <div className="ml-[5px]"><NavB d="M8 6 13 11 8 16" /></div>
        <div className="ml-[6px]"><NavB d="M15 6V16M7 6 12 11 7 16" /></div>
        <div className="ml-[4px]"><Sep h={28} /></div>
        <div className="ml-[4px]"><NavBack /></div>
        <div className="ml-[6px]"><NavFwd op={0.5} /></div>

        <div className="ml-[366px]"><Grip /></div>
        <div className="ml-[6px]"><PgIcon w={16} h={20} c="#777" /></div>
        <div className="ml-[7px] w-[27px] h-[28px] flex items-center justify-center bg-[#e3d3a4] border border-[#cdbd8f] rounded-[2px]">
          <S w={17} h={21}><rect x=".5" y=".5" width="16" height="9" fill="#fff" stroke="#666" /><Doc x={0} y={12} w={17} h={9} /></S>
        </div>
        <div className="ml-[3px] opacity-50 flex gap-[2px]"><PgIcon w={11} h={15} c="#888" /><PgIcon w={11} h={15} c="#888" /></div>
        <div className="ml-[4px] opacity-50 grid grid-cols-2 gap-[2px]"><div className="w-[10px] h-[9px] border border-[#888]" /><div className="w-[10px] h-[9px] border border-[#888]" /><PgIcon w={10} h={9} c="#888" /><PgIcon w={10} h={9} c="#888" /></div>
        <div className="ml-[7px]"><Grip /></div>
        <div className="ml-[1px]"><Combo w={80} /></div>
        <div className="ml-[3px]"><Sep h={28} /></div>
        <div className="ml-[5px]"><MinusC /></div>
        <div className="relative ml-[5px] w-[100px] h-[16px] flex items-center">
          <div className="w-full h-[3px] bg-[#c8c8c8] rounded-full" />
          <div className="absolute left-0 w-[75px] h-[3px] bg-[#8c8c8c] rounded-full" />
          <div className="absolute left-[49px] top-[2px] h-[12px] border-l border-dotted border-[#666]" />
          <div className="absolute left-[66px] top-[-1px] w-[18px] h-[18px] rounded-full bg-white border border-[#777] flex items-center justify-center"><div className="w-[8px] h-[8px] rounded-full bg-[#808080]" /></div>
        </div>
        <div className="ml-[5px]"><PlusC /></div>
        <div className="ml-[10px]"><Grip /></div>
        <div className="ml-[1px] w-[21px] h-[21px] rounded-[3px] bg-[#ab1412] flex items-center justify-center">
          <svg width="15" height="15" viewBox="0 0 15 15" className="block"><path d="M1 14C4 12 6 7 7 1 7.500 6 10 9 14 10 10 9.500 5 11 1 14Z" fill="none" stroke="#fff" strokeWidth="1.500" /></svg>
        </div>
        <div className="ml-[4px]"><Chev /></div>
        <div className="ml-[4px] -mt-[18px] flex flex-col items-center">
          <svg width="9" height="9" viewBox="0 0 9 9" className="block"><path d="M1 1 4.500 4.500 8 1M1 7H8" fill="none" stroke="#333" strokeWidth="1.200" /></svg>
        </div>
      </div>
    </div>
  );
}
